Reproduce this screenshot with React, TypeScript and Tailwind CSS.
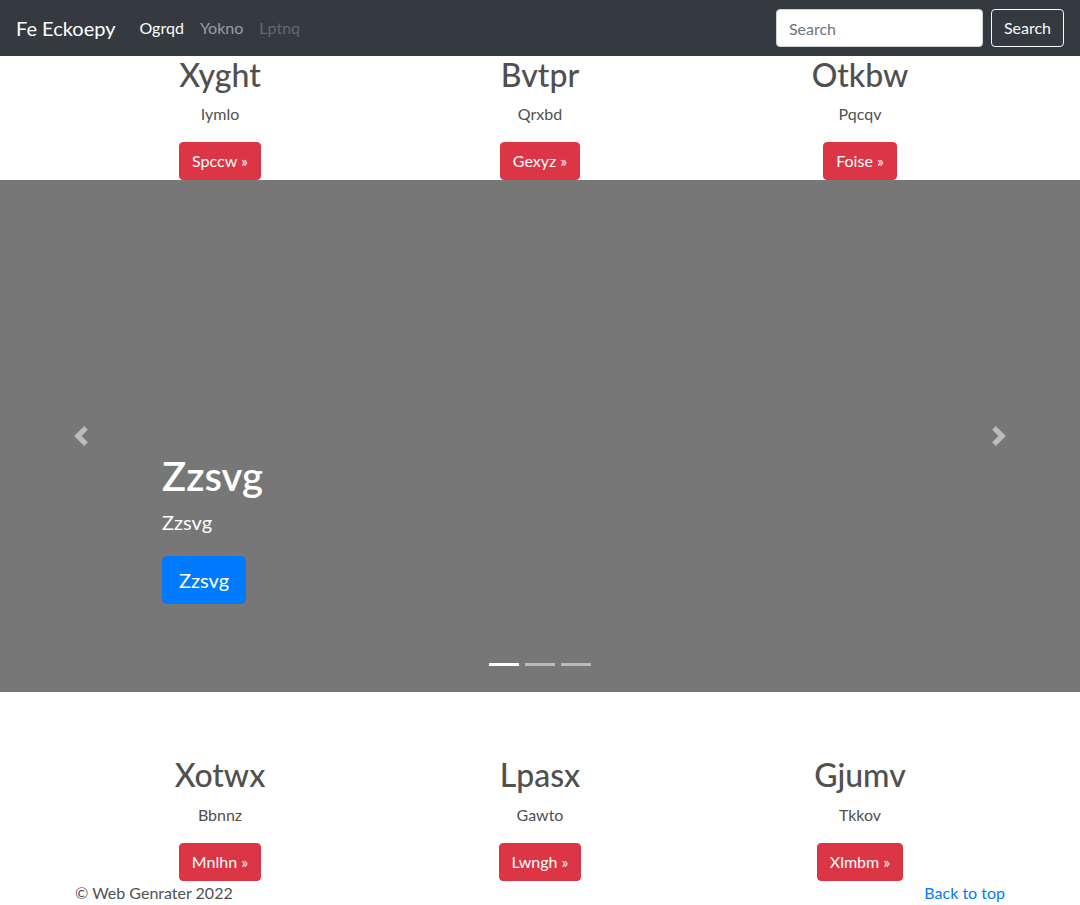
import React from 'react';

const font = { fontFamily: 'Lato, "Noto Sans", sans-serif' };

type Feature = { title: string; text: string; cta: string };

const topRow: Feature[] = [
    { title: 'Xyght', text: 'Iymlo', cta: 'Spccw' },
    { title: 'Bvtpr', text: 'Qrxbd', cta: 'Gexyz' },
    { title: 'Otkbw', text: 'Pqcqv', cta: 'Foise' },
];

const bottomRow: Feature[] = [
    { title: 'Xotwx', text: 'Bbnnz', cta: 'Mnlhn' },
    { title: 'Lpasx', text: 'Gawto', cta: 'Lwngh' },
    { title: 'Gjumv', text: 'Tkkov', cta: 'Xlmbm' },
];

function FeatureRow({ items }: { items: Feature[] }) {
    return (
        <div className="mx-auto grid w-[960px] grid-cols-3">
            {items.map((f) => (
                <div key={f.title} className="px-[15px] text-center text-[#505050]">
                    <h2 className="mb-2 text-[32px] font-medium leading-[1.2]">{f.title}</h2>
                    <p className="mb-4 text-base leading-6">{f.text}</p>
                    <p className="leading-6">
                        <a
                            href="#"
                            className="inline-block rounded-[4px] border border-[#dc3545] bg-[#dc3545] px-3 py-[6px] text-base leading-6 text-white"
                        >
                            {f.cta} &raquo;
                        </a>
                    </p>
                </div>
            ))}
        </div>
    );
}

function Chevron({ dir }: { dir: 'left' | 'right' }) {
    return (
        <svg width="20" height="20" viewBox="0 0 8 8" fill="#fff">
            {dir === 'left' ? (
                <path d="M5.25 0l-4 4 4 4 1.5-1.5L4.25 4l2.5-2.5L5.25 0z" />
            ) : (
                <path d="M2.75 0l-1.5 1.5L3.75 4l-2.5 2.5L2.75 8l4-4-4-4z" />
            )}
        </svg>
    );
}

export default function App() {
    return (
        <div className="min-h-[905px] bg-white" style={font}>
            {/* Navbar */}
            <nav className="flex h-14 items-center bg-[#343a40] px-4">
                <a href="#" className="mr-4 text-[20px] leading-[30px] text-white">
                    Fe Eckoepy
                </a>
                <ul className="flex items-center">
                    <li>
                        <a href="#" className="block px-2 py-2 text-base text-white">Ogrqd</a>
                    </li>
                    <li>
                        <a href="#" className="block px-2 py-2 text-base text-white/50">Yokno</a>
                    </li>
                    <li>
                        <span className="block px-2 py-2 text-base text-white/25">Lptnq</span>
                    </li>
                </ul>
                <form className="ml-auto flex items-center">
                    <input
                        type="text"
                        placeholder="Search"
                        className="mr-2 h-[38px] w-[207px] rounded-[4px] border border-[#ced4da] bg-white px-3 text-base text-[#495057] outline-none placeholder:text-[#6c757d]"
                    />
                    <button
                        type="button"
                        className="h-[38px] rounded-[4px] border border-[#f8f9fa] px-3 text-base text-[#f8f9fa]"
                    >
                        Search
                    </button>
                </form>
            </nav>

            <FeatureRow items={topRow} />

            {/* Carousel */}
            <div className="relative mb-16 h-[512px] bg-[#777]">
                <div className="absolute inset-y-0 left-0 flex w-[15%] items-center justify-center opacity-50">
                    <Chevron dir="left" />
                </div>
                <div className="absolute inset-y-0 right-0 flex w-[15%] items-center justify-center opacity-50">
                    <Chevron dir="right" />
                </div>

                <div className="absolute bottom-12 left-[15%] right-[15%] py-5 text-left text-white">
                    <h1 className="mb-2 text-[40px] font-semibold leading-[1.2]">Zzsvg</h1>
                    <p className="mb-5 text-[20px] leading-[1.4]">Zzsvg</p>
                    <p className="mb-5 text-[20px] leading-[1.4]">
                        <a
                            href="#"
                            className="inline-block rounded-[5px] border border-[#007bff] bg-[#007bff] px-4 py-2 text-[20px] leading-[1.5] text-white"
                        >
                            Zzsvg
                        </a>
                    </p>
                </div>

                <div className="absolute bottom-[26px] left-0 right-0 flex justify-center gap-[6px]">
                    <span className="h-[3px] w-[30px] bg-white" />
                    <span className="h-[3px] w-[30px] bg-white/50" />
                    <span className="h-[3px] w-[30px] bg-white/50" />
                </div>
            </div>

            <FeatureRow items={bottomRow} />

            {/* Footer */}
            <footer className="mx-auto flex w-[960px] justify-between px-[15px] text-base leading-6 text-[#505050]">
                <p>&copy; Web Genrater 2022</p>
                <a href="#" className="text-[#007bff]">Back to top</a>
            </footer>
        </div>
    );
}
